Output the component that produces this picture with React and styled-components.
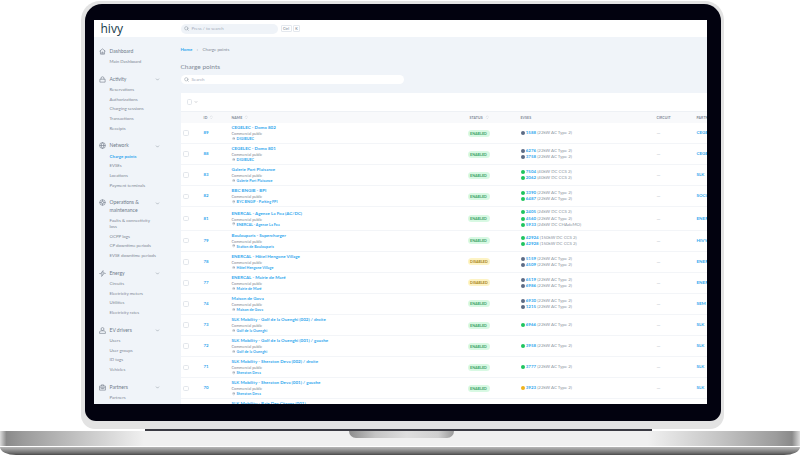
import React from 'react';
import styled, { createGlobalStyle } from 'styled-components';
import { ChevronDown, ChevronsUpDown, Search, MapPin } from 'lucide-react';

const GlobalStyle = createGlobalStyle`
  html, body {
    margin: 0;
    padding: 0;
    background: #fff;
    overflow: hidden;
  }
  * {
    box-sizing: border-box;
  }
`;

const navGroups = [
  { title: 'Dashboard', icon: 'home', items: ['Main Dashboard'] },
  { title: 'Activity', icon: 'bag', chevron: true, items: ['Reservations', 'Authorizations', 'Charging sessions', 'Transactions', 'Receipts'] },
  { title: 'Network', icon: 'globe', chevron: true, items: ['Charge points', 'EVSEs', 'Locations', 'Payment terminals'] },
  { title: 'Operations & maintenance', icon: 'gear', chevron: true, items: ['Faults & connectivity loss', 'OCPP logs', 'CP downtime periods', 'EVSE downtime periods'] },
  { title: 'Energy', icon: 'bolt', chevron: true, items: ['Circuits', 'Electricity meters', 'Utilities', 'Electricity rates'] },
  { title: 'EV drivers', icon: 'users', chevron: true, items: ['Users', 'User groups', 'ID tags', 'Vehicles'] },
  { title: 'Partners', icon: 'case', chevron: true, items: ['Partners'] },
];

const ac = '(22kW AC Type 2)';
const dc = '(40kW DC CCS 2)';
const rows = [
  { id: 89, name: 'CEGELEC - Domo 802', loc: 'DIGIBUEC', status: 'ENABLED', partner: 'CEGELEC', evses: [['grey', '1588', ac]] },
  { id: 88, name: 'CEGELEC - Domo 801', loc: 'DIGIBUEC', status: 'ENABLED', partner: 'CEGELEC', evses: [['grey', '6276', ac], ['grey', '3758', ac]] },
  { id: 83, name: 'Galerie Port Plaisance', loc: 'Galerie Port Plaisance', status: 'ENABLED', partner: 'SLK', evses: [['green', '7504', dc], ['green', '2062', dc]] },
  { id: 82, name: 'BBC BNGIB - BPI', loc: 'BYC BNGIF - Parking FPI', status: 'ENABLED', partner: 'SOCOGEM', evses: [['green', '3390', ac], ['green', '6487', ac]] },
  { id: 81, name: 'ENERCAL - Agence La Foa (AC/DC)', loc: 'ENERCAL - Agence La Foa', status: 'ENABLED', partner: 'ENERCAL', evses: [['green', '2405', '(24kW DC CCS 2)'], ['green', '4560', ac], ['green', '5933', '(24kW DC CHAdeMO)']] },
  { id: 79, name: 'Boulouparis - Supercharger', loc: 'Station de Boulouparis', status: 'ENABLED', partner: 'HIVY', evses: [['green', '42924', '(150kW DC CCS 2)'], ['green', '42928', '(150kW DC CCS 2)']] },
  { id: 78, name: 'ENERCAL - Hôtel Hengone Village', loc: 'Hôtel Hengone Village', status: 'DISABLED', partner: 'ENERCAL', evses: [['grey', '5159', ac], ['grey', '4509', ac]] },
  { id: 77, name: 'ENERCAL - Mairie de Maré', loc: 'Mairie de Maré', status: 'DISABLED', partner: 'ENERCAL', evses: [['grey', '6519', ac], ['grey', '6986', ac]] },
  { id: 74, name: 'Maison de Gova', loc: 'Maison de Gova', status: 'ENABLED', partner: 'SEM', evses: [['grey', '6930', ac], ['grey', '1215', ac]] },
  { id: 73, name: 'SLK Mobility - Golf de la Ouenghi (002) / droite', loc: 'Golf de la Ouenghi', status: 'ENABLED', partner: 'SLK', evses: [['green', '6966', ac]] },
  { id: 72, name: 'SLK Mobility - Golf de la Ouenghi (001) / gauche', loc: 'Golf de la Ouenghi', status: 'ENABLED', partner: 'SLK', evses: [['green', '3958', ac]] },
  { id: 71, name: 'SLK Mobility - Sheraton Deva (002) / droite', loc: 'Sheraton Deva', status: 'ENABLED', partner: 'SLK', evses: [['green', '3777', ac]] },
  { id: 70, name: 'SLK Mobility - Sheraton Deva (001) / gauche', loc: 'Sheraton Deva', status: 'ENABLED', partner: 'SLK', evses: [['amber', '3923', ac]] },
  { id: 69, name: 'SLK Mobility - Baie Des Citrons (001)', loc: 'Baie Des Citrons', status: 'ENABLED', partner: 'SLK', evses: [['green', '3921', ac]] },
];

const dotColors = { grey: '#5d6b85', green: '#1fc45f', amber: '#f0b31c' };
const blue = '#33a8ee';

const Page = styled.div`
  width: 800px;
  height: 456px;
  display: flex;
  flex-direction: column;
  align-items: center;
  padding-top: 1px;
  font-family: Lato, 'Liberation Sans', sans-serif;
`;

const Lid = styled.div`
  width: 643px;
  height: 428px;
  margin-left: 4px;
  padding: 3px 3px 8px 4px;
  background: #e3e3e3;
  border-radius: 19px 19px 14px 14px;
`;

const Bezel = styled.div`
  height: 100%;
  padding: 16px 14px 17px 9px;
  background: #02020f;
  border-radius: 17px 17px 11px 11px;
`;

const Screen = styled.div`
  height: 100%;
  display: flex;
  flex-direction: column;
  overflow: hidden;
  background: #f0f4f9;
  filter: blur(0.25px);
`;

const TopBar = styled.header`
  height: 17px;
  flex: none;
  display: flex;
  align-items: center;
  background: #fff;
`;

const Logo = styled.div`
  width: 87px;
  padding-left: 7px;
  color: #16394a;
  font-family: 'Open Sans', sans-serif;
  font-size: 12px;
  line-height: 11px;
`;

const SearchPill = styled.div`
  width: 97px;
  height: 10px;
  display: flex;
  align-items: center;
  gap: 3px;
  padding-left: 3px;
  border-radius: 5px;
  background: #eff3f8;
  color: #a3adbb;
  font-size: 4.4px;
`;

const Keys = styled.div`
  display: flex;
  gap: 1px;
  margin-left: 3px;
`;

const Key = styled.span`
  height: 6.5px;
  padding: 0 1.5px;
  border: 0.4px solid #e4e8ee;
  border-radius: 1px;
  color: #6f7a89;
  font-size: 3.8px;
  line-height: 5px;
`;

const Body = styled.div`
  flex: 1;
  min-height: 0;
  display: flex;
`;

const Sidebar = styled.nav`
  width: 87px;
  flex: none;
  padding: 10.9px 20.5px 0 5px;
`;

const NavGroup = styled.div`
  margin-bottom: 8.9px;
`;

const NavHead = styled.div`
  display: flex;
  align-items: flex-start;
  min-height: 7.2px;
  margin-bottom: 2.1px;
  color: #6f7a89;
  font-size: 5px;
  line-height: 7.2px;
`;

const NavIcon = styled.svg`
  width: 7px;
  height: 7px;
  flex: none;
  margin-right: 4px;
  fill: none;
  stroke: #5d6877;
  stroke-width: 1.8;
`;

const NavTitle = styled.span`
  flex: 1;
`;

const NavChevron = styled.span`
  display: flex;
  height: 7.2px;
  align-items: center;
`;

const NavItem = styled.div`
  max-width: 59px;
  padding: 1.75px 0 1.75px 11px;
  color: ${({ $active }) => ($active ? blue : '#7f8894')};
  font-size: 4.4px;
  font-weight: ${({ $active }) => ($active ? 700 : 400)};
  line-height: 6.2px;
`;

const Main = styled.main`
  flex: 1;
  min-width: 0;
`;

const Crumbs = styled.div`
  display: flex;
  gap: 4.5px;
  margin-top: 9.5px;
  color: #7f8894;
  font-size: 4.4px;
  line-height: 6px;
`;

const CrumbLink = styled.span`
  color: ${blue};
  font-weight: 700;
`;

const PageTitle = styled.h1`
  margin: 9.5px 0 0;
  color: #808a97;
  font-size: 6.5px;
  font-weight: 400;
  line-height: 9px;
`;

const FilterBox = styled.div`
  width: 223px;
  height: 9px;
  margin-top: 4px;
  display: flex;
  align-items: center;
  gap: 3px;
  padding-left: 3px;
  border-radius: 4.5px;
  background: #fff;
  color: #a3adbb;
  font-size: 4.4px;
`;

const Card = styled.section`
  width: 540px;
  margin-top: 9px;
  background: #fff;
`;

const CardTools = styled.div`
  height: 18px;
  display: flex;
  align-items: center;
  gap: 2px;
  padding-left: 6px;
`;

const Check = styled.span`
  width: 5.5px;
  height: 5.5px;
  flex: none;
  border: 0.5px solid #e2e6eb;
  border-radius: 1.6px;
  background: #fff;
`;

const Grid = styled.div`
  display: grid;
  grid-template-columns: 23px 28px 236px 53px 136px 40px 1fr;
  align-items: center;
  font-size: 5px;
  line-height: 6px;
`;

const HeadRow = styled(Grid)`
  height: 12px;
  background: #f8f9fb;
  border-top: 0.5px solid #eef1f5;
  color: #808a97;
  font-size: 3.5px;
  font-weight: 700;
  letter-spacing: 0.1px;
`;

const HeadCell = styled.div`
  display: flex;
  align-items: center;
  gap: 2px;
  padding-left: ${({ $inset }) => ($inset ? '2px' : '0')};
`;

const Row = styled(Grid)`
  min-height: 21.1px;
  padding: 2px 0;
  border-bottom: 0.5px solid #f3f5f8;
`;

const CheckCell = styled.div`
  display: flex;
  padding-left: 2.5px;
`;

const IdCell = styled.div`
  color: ${blue};
  font-size: 4.4px;
  font-weight: 700;
`;

const NameLink = styled.div`
  color: ${blue};
  font-size: 4.5px;
  font-weight: 700;
  line-height: 6px;
  white-space: nowrap;
`;

const SubText = styled.div`
  color: #7f8894;
  font-size: 3.8px;
  line-height: 5px;
`;

const LocationLine = styled.div`
  display: flex;
  align-items: center;
  gap: 1.6px;
  color: ${blue};
  font-size: 3.7px;
  font-weight: 700;
  line-height: 5px;
`;

const StatusCell = styled.div`
  display: flex;
`;

const Badge = styled.span`
  height: 7px;
  min-width: 22px;
  padding: 0 2.6px;
  border-radius: 3.5px;
  text-align: center;
  background: ${({ $off }) => ($off ? '#fdf3c4' : '#d8f9e3')};
  color: ${({ $off }) => ($off ? '#a5831a' : '#3aa266')};
  font-size: 3.7px;
  font-weight: 700;
  line-height: 7px;
`;

const EvseLine = styled.div`
  display: flex;
  align-items: center;
  height: 6.1px;
  color: #8a93a0;
  font-size: 4.4px;
  white-space: nowrap;
`;

const Dot = styled.span`
  width: 4px;
  height: 4px;
  margin-right: 1.3px;
  border-radius: 50%;
  background: ${({ $tone }) => dotColors[$tone]};
`;

const EvseId = styled.span`
  margin-right: 1.2px;
  color: ${blue};
  font-weight: 700;
`;

const Dash = styled.div`
  color: #b4bbc5;
  font-size: 5px;
`;

const PartnerLink = styled.div`
  color: ${blue};
  font-size: 4.5px;
  font-weight: 700;
  white-space: nowrap;
`;

const Base = styled.div`
  position: relative;
  width: 800px;
  height: 24px;
  margin-top: 2px;
  display: flex;
  flex-direction: column;
  align-items: center;
`;

const DeckTop = styled.div`
  width: 100%;
  height: 14.5px;
  flex: none;
  background: linear-gradient(
    90deg,
    #dcdcdc 0,
    #8a8a8a 0.8%,
    #9c9c9c 3%,
    #c4c4c4 10%,
    #f0f0f0 18%,
    #f0f0f0 81%,
    #c4c4c4 90%,
    #9c9c9c 97%,
    #8a8a8a 99%,
    #dcdcdc 100%
  );
`;

const DeckFront = styled.div`
  width: 100%;
  flex: 1;
  border-top: 0.8px solid #fff;
  border-radius: 0 0 16px 16px / 0 0 8px 8px;
  background: linear-gradient(180deg, #b8b8b8 0, #969696 35%, #6e6e6e 75%, #4a4a4a 100%);
`;

const HingeShadow = styled.div`
  position: absolute;
  top: -2px;
  left: 145px;
  right: 148px;
  height: 2px;
  background: #3a3a42;
`;

const Notch = styled.div`
  position: absolute;
  top: 0;
  left: 349px;
  width: 105px;
  height: 7px;
  border-radius: 0 0 8px 8px;
  background: linear-gradient(90deg, #8d8d8d 0, #c4c4c4 25%, #dedede 55%, #cfcfcf 85%, #9a9a9a 100%);
`;

const GlyphPaths = {
  home: <path d="M2 11 L12 3 L22 11 M5 9 V21 H19 V9 M10 21 V14 H14 V21" />,
  bag: <path d="M3 11 H21 V21 H3 Z M7 11 V7 C7 1 17 1 17 7 V11" />,
  globe: <><circle cx="12" cy="12" r="10" /><path d="M2 12 H22 M12 2 C6 8 6 16 12 22 C18 16 18 8 12 2" /></>,
  gear: <><circle cx="12" cy="12" r="9.5" /><circle cx="12" cy="12" r="4" /><path d="M12 2 V8 M12 16 V22 M2 12 H8 M16 12 H22" /></>,
  bolt: <path d="M14 2 L5 13 H11 L9 22 L19 10 H13 Z M1 12 H4 M20 12 H23" />,
  users: <><circle cx="12" cy="7" r="5" /><path d="M2 22 V17 C2 14 6 13 12 13 C18 13 22 14 22 17 V22 Z" /></>,
  case: <path d="M2 7 H22 V21 H2 Z M8 7 V3 H16 V7 M2 13 H22 M9 13 V16 H15 V13" />,
};

const Glyph = ({ name }) => <NavIcon viewBox="0 0 24 24">{GlyphPaths[name]}</NavIcon>;

const Sort = () => <ChevronsUpDown size={4.5} color="#c3c9d2" strokeWidth={2} />;

const App = () => {
  return (
    <>
      <GlobalStyle />
      <Page>
        <Lid>
          <Bezel>
            <Screen>
              <TopBar>
                <Logo>hivy</Logo>
                <SearchPill>
                  <Search size={5} color="#7d8795" />
                  Press / to search
                </SearchPill>
                <Keys>
                  <Key>Ctrl</Key>
                  <Key>K</Key>
                </Keys>
              </TopBar>
              <Body>
                <Sidebar>
                  {navGroups.map((group) => (
                    <NavGroup key={group.title}>
                      <NavHead>
                        <Glyph name={group.icon} />
                        <NavTitle>{group.title}</NavTitle>
                        {group.chevron && (
                          <NavChevron>
                            <ChevronDown size={5} color="#6c7684" />
                          </NavChevron>
                        )}
                      </NavHead>
                      {group.items.map((item) => (
                        <NavItem key={item} $active={item === 'Charge points'}>
                          {item}
                        </NavItem>
                      ))}
                    </NavGroup>
                  ))}
                </Sidebar>
                <Main>
                  <Crumbs>
                    <CrumbLink>Home</CrumbLink>
                    <span>›</span>
                    <span>Charge points</span>
                  </Crumbs>
                  <PageTitle>Charge points</PageTitle>
                  <FilterBox>
                    <Search size={5} color="#7d8795" />
                    Search
                  </FilterBox>
                  <Card>
                    <CardTools>
                      <Check />
                      <ChevronDown size={4} color="#6c7684" />
                    </CardTools>
                    <HeadRow>
                      <span />
                      <HeadCell>ID <Sort /></HeadCell>
                      <HeadCell>NAME <Sort /></HeadCell>
                      <HeadCell $inset>STATUS <Sort /></HeadCell>
                      <HeadCell>EVSES</HeadCell>
                      <HeadCell>CIRCUIT</HeadCell>
                      <HeadCell>PARTNER</HeadCell>
                    </HeadRow>
                    {rows.map((row) => (
                      <Row key={row.id}>
                        <CheckCell><Check /></CheckCell>
                        <IdCell>{row.id}</IdCell>
                        <div>
                          <NameLink>{row.name}</NameLink>
                          <SubText>Commercial public</SubText>
                          <LocationLine>
                            <MapPin size={3.5} color="#6f7a89" />
                            {row.loc}
                          </LocationLine>
                        </div>
                        <StatusCell>
                          <Badge $off={row.status === 'DISABLED'}>{row.status}</Badge>
                        </StatusCell>
                        <div>
                          {row.evses.map(([tone, id, kind]) => (
                            <EvseLine key={id}>
                              <Dot $tone={tone} />
                              <EvseId>{id}</EvseId>
                              {kind}
                            </EvseLine>
                          ))}
                        </div>
                        <Dash>—</Dash>
                        <PartnerLink>{row.partner}</PartnerLink>
                      </Row>
                    ))}
                  </Card>
                </Main>
              </Body>
            </Screen>
          </Bezel>
        </Lid>
        <Base>
          <HingeShadow />
          <DeckTop />
          <DeckFront />
          <Notch />
        </Base>
      </Page>
    </>
  );
};

export default App;
